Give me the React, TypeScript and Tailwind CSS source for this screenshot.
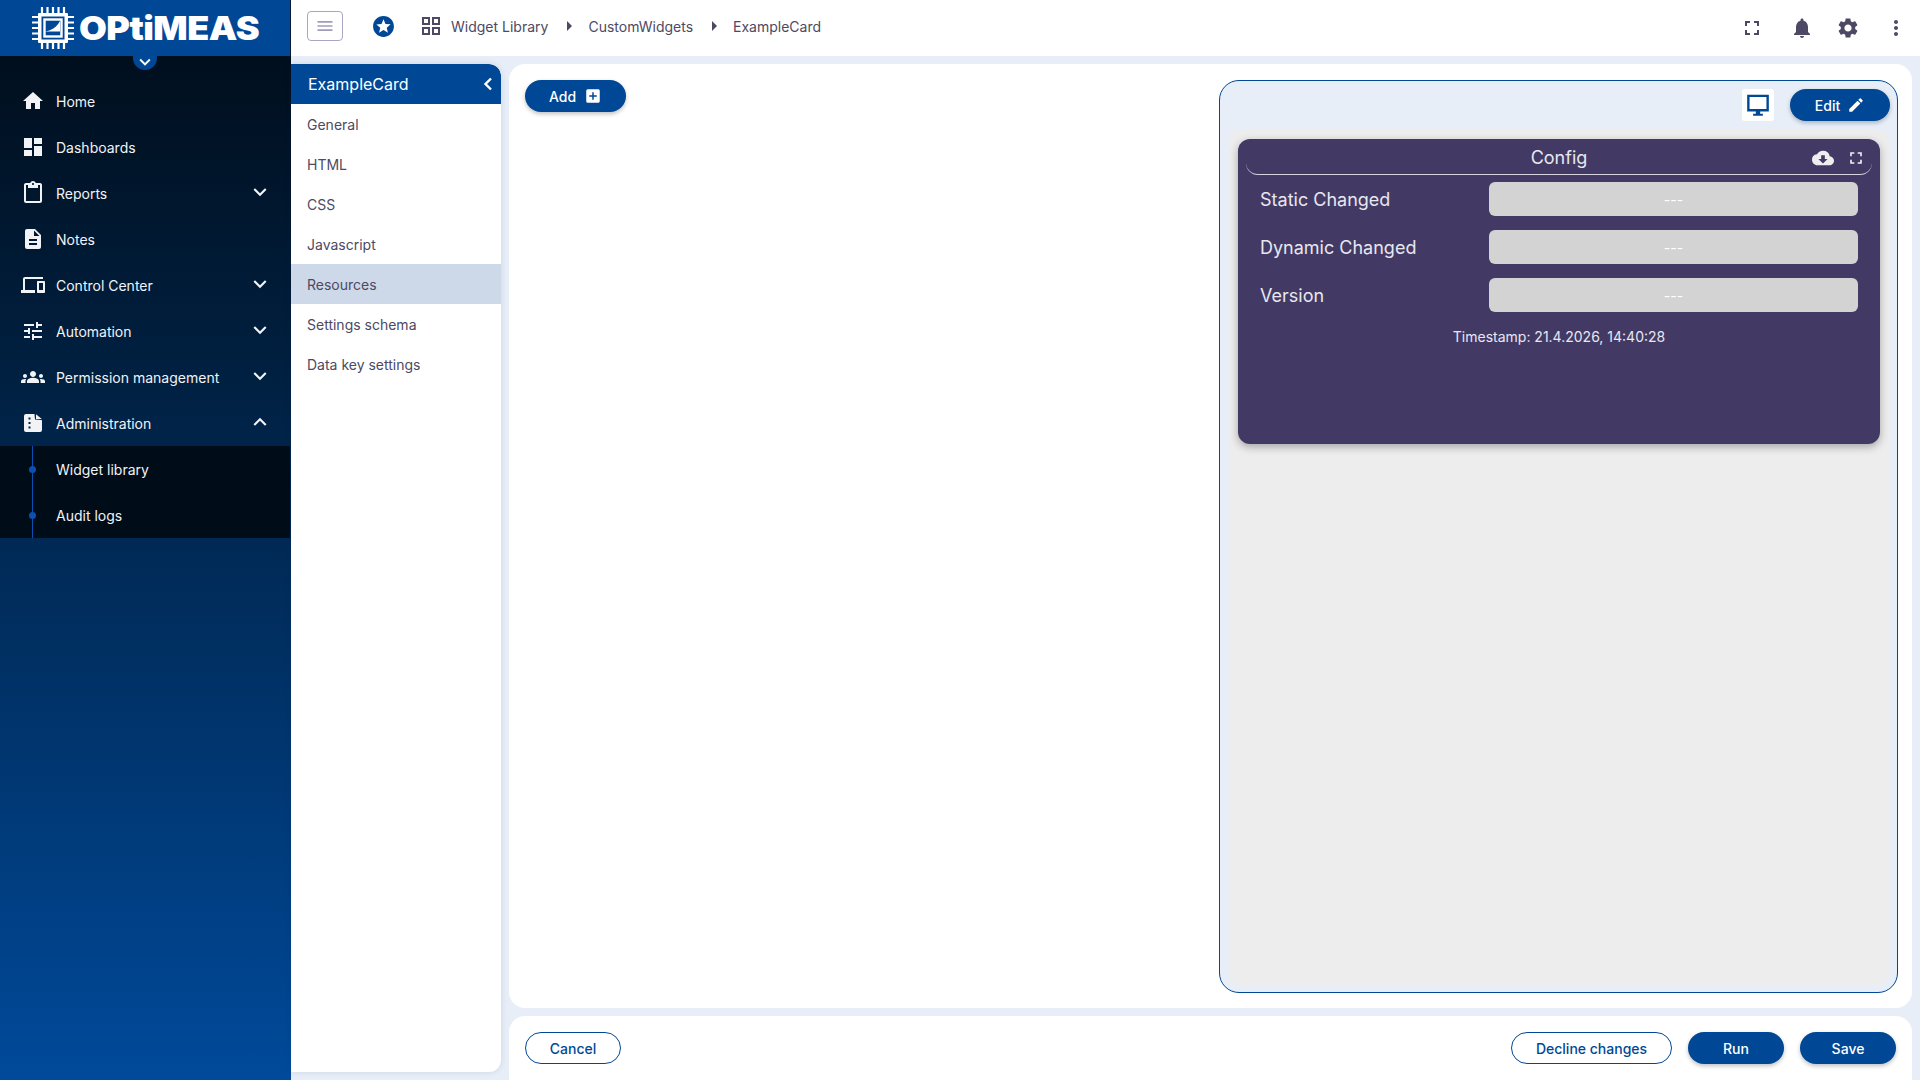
import {
  MdHome,
  MdDashboard,
  MdContentPaste,
  MdDescription,
  MdDevices,
  MdTune,
  MdGroups,
  MdExpandMore,
  MdExpandLess,
  MdMenu,
  MdStars,
  MdOutlineGridView,
  MdArrowRight,
  MdFullscreen,
  MdNotifications,
  MdSettings,
  MdMoreVert,
  MdAddBox,
  MdEdit,
  MdCloudDownload,
} from "react-icons/md";
import type { ReactNode } from "react";

function AdminIcon() {
  return (
    <svg width="24" height="24" viewBox="0 0 24 24" fill="currentColor">
      <path
        fillRule="evenodd"
        d="M5 3h8.5l.5 5.5 6.500.5.500.500V19a2 2 0 0 1-2 2H5a2 2 0 0 1-2-2V5a2 2 0 0 1 2-2zm2.500 3.500v2h2v-2h-2zm0 4.500v2h2v-2h-2zm0 4.500v2h2v-2h-2z"
      />
      <path d="M15 3.200 20.800 8H15z" />
    </svg>
  );
}

function DesktopIcon() {
  return (
    <svg width="26" height="26" viewBox="0 0 24 24" fill="currentColor">
      <path
        fillRule="evenodd"
        d="M2 2.500h20v15.500h-8v2h2.500v2h-9v-2H10v-2H2V2.500zm2.200 2.200v11.100h15.600V4.700H4.200z"
      />
    </svg>
  );
}

function ChipLogo() {
  const pins = [0, 1, 2, 3, 4];
  return (
    <svg width="42" height="42" viewBox="0 0 42 42" fill="none" stroke="#fff">
      {pins.map((i) => (
        <g key={i} strokeWidth="2.2">
          <path d={`M${10 + i * 5.5} 0v7M${10 + i * 5.5} 35v7M0 ${10 + i * 5.5}h7M35 ${10 + i * 5.5}h7`} />
        </g>
      ))}
      <rect x="6" y="6" width="30" height="30" rx="1" fill="#fff" stroke="none" />
      <rect x="9.5" y="9.5" width="23" height="23" fill="#004896" stroke="none" />
      <rect x="12.5" y="12.5" width="17" height="17" stroke="#fff" strokeWidth="2.4" />
      <path d="M13 24.500c6-1 11-3.500 15-10.500v10.500z" fill="#fff" stroke="none" />
    </svg>
  );
}

function MenuItem({ icon, label, chevron }: { icon: ReactNode; label: string; chevron?: "down" | "up" }) {
  return (
    <div className="flex h-[46px] items-center text-[14px] text-[#f1f3f6]">
      <div className="flex w-[56px] items-center justify-center pl-[10px]">{icon}</div>
      <span className="flex-1">{label}</span>
      {chevron === "down" && <MdExpandMore size={26} className="mr-[18px] -translate-y-px" />}
      {chevron === "up" && <MdExpandLess size={26} className="mr-[18px] -translate-y-px" />}
    </div>
  );
}

function SubItem({ label }: { label: string }) {
  return (
    <div className="relative flex h-[46px] items-center pl-[56px] text-[14px] text-[#f1f3f6]">
      <span className="absolute left-[29px] top-[20px] h-[7px] w-[7px] rounded-full bg-[#0b4fb3]" />
      {label}
    </div>
  );
}

function Sidebar() {
  return (
    <aside className="flex h-full w-[291px] shrink-0 flex-col bg-linear-to-b from-[#000c18] to-[#004a9b]">
      <div className="relative flex h-14 shrink-0 items-center gap-[5px] bg-[#004896] pl-[32px] border-r border-[#001a38]">
        <ChipLogo />
        <span className="inline-block origin-left scale-x-[1.09] text-[33px] leading-none font-black tracking-[-0.5px] text-white">
          OPtiMEAS
        </span>
        <div className="absolute left-[133px] top-14 flex h-[14px] w-6 items-end justify-center rounded-b-full bg-[#004896] text-white">
          <MdExpandMore size={22} className="-mb-[3px]" />
        </div>
      </div>
      <nav className="pt-[22px]">
        <MenuItem icon={<MdHome size={24} />} label="Home" />
        <MenuItem icon={<MdDashboard size={24} />} label="Dashboards" />
        <MenuItem icon={<MdContentPaste size={24} />} label="Reports" chevron="down" />
        <MenuItem icon={<MdDescription size={24} />} label="Notes" />
        <MenuItem icon={<MdDevices size={24} />} label="Control Center" chevron="down" />
        <MenuItem icon={<MdTune size={24} />} label="Automation" chevron="down" />
        <MenuItem icon={<MdGroups size={24} />} label="Permission management" chevron="down" />
        <MenuItem icon={<AdminIcon />} label="Administration" chevron="up" />
        <div className="relative mr-px bg-[#000c18]">
          <span className="absolute bottom-0 left-[32px] top-0 w-px bg-[#0b4fb3]" />
          <SubItem label="Widget library" />
          <SubItem label="Audit logs" />
        </div>
      </nav>
    </aside>
  );
}

function TopBar() {
  const crumb = "text-[14px] text-[#4d4964]";
  return (
    <header className="flex h-14 shrink-0 items-center bg-white pb-1 pl-4 text-[#4d4964]">
      <button className="flex h-[30px] w-[36px] items-center justify-center rounded-[4px] border border-[#a9a6c4] text-[#a09dba]">
        <MdMenu size={20} />
      </button>
      <MdStars size={25} className="ml-[28px] text-[#004896]" />
      <MdOutlineGridView size={24} className="ml-[23px]" />
      <span className={`${crumb} ml-[8px]`}>Widget Library</span>
      <MdArrowRight size={24} className="ml-[9px]" />
      <span className={`${crumb} ml-[7px]`}>CustomWidgets</span>
      <MdArrowRight size={24} className="ml-[9px]" />
      <span className={`${crumb} ml-[7px]`}>ExampleCard</span>
      <div className="ml-auto mt-1 flex items-center pr-[12px]">
        <MdFullscreen size={24} />
        <MdNotifications size={24} className="ml-[26px]" />
        <MdSettings size={24} className="ml-[22px]" />
        <MdMoreVert size={24} className="ml-[24px]" />
      </div>
    </header>
  );
}

function SideList() {
  const items = ["General", "HTML", "CSS", "Javascript", "Resources", "Settings schema", "Data key settings"];
  return (
    <div className="mb-2 w-[210px] shrink-0 overflow-hidden rounded-r-[12px] bg-white shadow-[0_0_6px_rgba(0,40,100,0.12)]">
      <div className="flex h-10 items-center justify-between rounded-tr-[12px] bg-[#004896] pl-[17px] pr-[7px] text-[16px] text-white">
        ExampleCard
        <svg width="12" height="14" viewBox="0 0 12 14" fill="none" stroke="currentColor" strokeWidth="2.400">
          <path d="M9 1.500 3.500 7 9 12.500" />
        </svg>
      </div>
      {items.map((item) => (
        <div
          key={item}
          className={`flex h-10 items-center pl-4 text-[14px] text-[#4d4964] ${item === "Resources" ? "bg-[#cdd9e8]" : ""}`}
        >
          {item}
        </div>
      ))}
    </div>
  );
}

function PillButton({ children, className }: { children: ReactNode; className: string }) {
  return (
    <button className={`flex h-8 items-center justify-center rounded-full text-[14px] font-medium ${className}`}>
      {children}
    </button>
  );
}

const solid = "bg-[#004896] text-white shadow-[0_2px_4px_rgba(0,0,0,0.25)]";
const outline = "border border-[#004896] text-[#004896]";

function ConfigCard() {
  const rows = ["Static Changed", "Dynamic Changed", "Version"];
  return (
    <div className="h-[305px] rounded-[12px] bg-[#423a65] px-2 text-white shadow-[0_3px_8px_rgba(0,0,0,0.3)]">
      <div className="relative flex h-[36px] items-center justify-center rounded-b-[12px] border-b border-[#d8d6e2] pt-[2px] text-[18px] text-[#e8e7ef]">
        Config
        <MdCloudDownload size={22} className="absolute right-[38px] top-[8px] text-[#eeeeee]" />
        <MdFullscreen size={20} className="absolute right-[6px] top-[9px] text-[#eeeeee]" />
      </div>
      <div className="mt-[7px] flex flex-col gap-[14px] px-[14px]">
        {rows.map((row) => (
          <div key={row} className="flex h-[34px] items-center">
            <span className="w-[229px] shrink-0 text-[18px] text-[#e8e7ef]">{row}</span>
            <div className="flex h-full flex-1 items-center justify-center rounded-[6px] bg-[#d3d3d3] text-[14px] text-white">
              ---
            </div>
          </div>
        ))}
      </div>
      <div className="mt-[14px] text-center text-[14px] text-[#e8e7ef]">Timestamp: 21.4.2026, 14:40:28</div>
    </div>
  );
}

function Preview() {
  return (
    <div className="flex w-[679px] shrink-0 flex-col rounded-[20px] border border-[#004896] bg-[#e7eef8] pt-2">
      <div className="flex items-center justify-end gap-4 pr-[7px]">
        <div className="flex h-8 w-8 items-center justify-center rounded-[3px] bg-white text-[#004896]">
          <DesktopIcon />
        </div>
        <PillButton className={`w-[100px] gap-[7px] ${solid}`}>
          Edit
          <MdEdit size={18} />
        </PillButton>
      </div>
      <div className="mb-[7px] ml-[9px] mr-[8px] mt-2 flex-1 rounded-[12px] bg-[#ededed] py-[10px] pl-[9px] pr-[9px]">
        <ConfigCard />
      </div>
    </div>
  );
}

export default function App() {
  return (
    <div className="flex h-screen w-full overflow-hidden bg-[#e7eef8] font-[Inter,sans-serif]">
      <Sidebar />
      <div className="flex min-w-0 flex-1 flex-col">
        <TopBar />
        <div className="flex min-h-0 flex-1 gap-2 pr-2 pt-2">
          <SideList />
          <div className="flex min-w-0 flex-1 flex-col gap-2">
            <main className="flex min-h-0 flex-1 justify-between rounded-[16px] bg-white pb-[15px] pl-4 pr-[14px] pt-4">
              <PillButton className={`w-[101px] gap-[8px] ${solid}`}>
                Add
                <MdAddBox size={18} />
              </PillButton>
              <Preview />
            </main>
            <footer className="flex h-16 shrink-0 items-start rounded-t-[16px] bg-white pl-4 pr-4 pt-4">
              <PillButton className={`w-[96px] ${outline}`}>Cancel</PillButton>
              <PillButton className={`ml-auto w-[161px] ${outline}`}>Decline changes</PillButton>
              <PillButton className={`ml-4 w-[96px] ${solid}`}>Run</PillButton>
              <PillButton className={`ml-4 w-[96px] ${solid}`}>Save</PillButton>
            </footer>
          </div>
        </div>
      </div>
    </div>
  );
}
